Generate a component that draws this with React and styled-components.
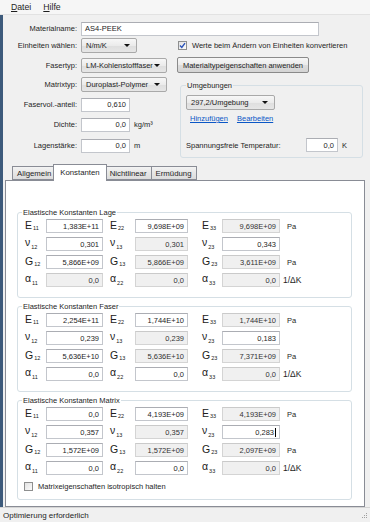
import React from 'react';
import styled, { createGlobalStyle } from 'styled-components';

const GlobalStyle = createGlobalStyle`
  html, body { margin: 0; padding: 0; }
  body {
    background: #f0f0f0;
    font-family: "Liberation Sans", Arial, sans-serif;
    font-size: 7.5px;
    color: #1e1e1e;
  }
`;

const Window = styled.div`
  width: 370px;
  height: 522px;
  display: flex;
  flex-direction: column;
  overflow: hidden;
  background: #f0f0f0;
`;

const MenuBar = styled.div`
  height: 14px;
  display: flex;
  align-items: center;
  gap: 12px;
  padding-left: 11px;
  background: #f6f6f6;
  border-bottom: 1px solid #e2e2e2;
  font-size: 8.7px;
  u { text-decoration: underline; }
`;

const Body = styled.div`
  flex: 1;
  min-height: 0;
  display: flex;
  flex-direction: column;
  border-left: 3px solid #3d5a7b;
`;

const Top = styled.div`
  display: flex;
  flex-direction: column;
  gap: 5px;
  padding-top: 6px;
`;

const Row = styled.div`
  display: grid;
  grid-template-columns: 74px 92px 1fr;
  column-gap: 4px;
  align-items: center;
  height: 15px;
  margin-bottom: ${p => p.$mb || 0}px;
`;

const Label = styled.span`
  text-align: right;
  white-space: nowrap;
`;

const TextBox = styled.div`
  box-sizing: border-box;
  width: ${p => p.$w}px;
  height: 14px;
  display: flex;
  align-items: center;
  justify-content: ${p => (p.$left ? 'flex-start' : 'flex-end')};
  padding: 0 3px;
  background: #fff;
  border: 1px solid #c3c6cc;
  border-top-color: #abadb3;
  grid-column: ${p => p.$span || 'auto'};
`;

const FieldWithUnit = styled.div`
  display: flex;
  align-items: center;
  gap: 4px;
  white-space: nowrap;
`;

const Combo = styled.div`
  box-sizing: border-box;
  position: relative;
  width: ${p => p.$w}px;
  height: 15px;
  display: flex;
  align-items: center;
  padding-left: 4px;
  border: 1px solid #a9a9a9;
  border-radius: 2px;
  background: linear-gradient(#f7f7f7, #ebebeb 50%, #dedede 51%, #e6e6e6);
  white-space: nowrap;
  &::after {
    content: '';
    position: absolute;
    right: 6px;
    top: 5px;
    border-left: 3px solid transparent;
    border-right: 3px solid transparent;
    border-top: 3px solid #111;
  }
`;

const CheckLine = styled.label`
  display: flex;
  align-items: center;
  gap: 5px;
  white-space: nowrap;
  margin-left: ${p => p.$ml || 0}px;
  margin-top: ${p => p.$mt || 0}px;
`;

const Box = styled.span`
  box-sizing: border-box;
  width: 9px;
  height: 9px;
  border: 1px solid #8e8f8f;
  background: linear-gradient(135deg, #e2e2e2, #fbfbfb);
  display: flex;
  align-items: center;
  justify-content: center;
`;

const Button = styled.div`
  box-sizing: border-box;
  width: 132px;
  height: 16px;
  display: flex;
  align-items: center;
  justify-content: center;
  border: 1px solid #8a8a8a;
  border-radius: 2px;
  background: linear-gradient(#f6f6f6, #ebebeb 50%, #dddddd 51%, #d4d4d4);
  white-space: nowrap;
`;

const Split = styled.div`
  display: flex;
  align-items: flex-start;
`;

const LeftCol = styled.div`
  display: flex;
  flex-direction: column;
  gap: 5px;
  width: 170px;
`;

const EnvGroup = styled.fieldset`
  box-sizing: border-box;
  margin: 4px 0 0 7px;
  padding: 0 5px;
  width: 183px;
  height: 77px;
  border: 1px solid #d5dfe5;
  border-radius: 3px;
  min-width: 0;
`;

const Legend = styled.legend`
  padding: 0 1px;
  margin-left: ${p => p.$ml || 0}px;
  line-height: 9px;
  font-size: 7.5px;
`;

const Links = styled.div`
  display: flex;
  gap: 9px;
  margin: 4px 0 0 4px;
`;

const Link = styled.span`
  color: #0b57c6;
  text-decoration: underline;
`;

const TempRow = styled.div`
  display: flex;
  align-items: center;
  margin-top: 15px;
  span:first-child { width: 120px; }
`;

const TabStrip = styled.div`
  display: flex;
  align-items: flex-end;
  padding-left: 9px;
  margin-top: 5px;
  height: 17px;
  font-size: 7.8px;
`;

const Tab = styled.div`
  box-sizing: border-box;
  height: ${p => (p.$active ? 17 : 14)}px;
  padding: 0 ${p => (p.$active ? 6 : 4)}px;
  margin: 0 ${p => (p.$active ? -2 : 0)}px -${p => (p.$active ? 1 : 0)}px;
  display: flex;
  align-items: ${p => (p.$active ? 'flex-start' : 'center')};
  padding-top: ${p => (p.$active ? 3 : 0)}px;
  border: 1px solid #898c95;
  border-bottom: ${p => (p.$active ? 'none' : '1px solid #898c95')};
  border-right-width: ${p => (p.$last || p.$active ? 1 : 0)}px;
  background: ${p => (p.$active ? '#fff' : 'linear-gradient(#f3f3f3, #e6e6e6 50%, #dcdcdc)')};
  position: relative;
  z-index: ${p => (p.$active ? 2 : 1)};
  white-space: nowrap;
`;

const Panel = styled.div`
  flex: 1;
  min-height: 0;
  margin: 0 5px 0 2px;
  padding: 27px 12px 0 11px;
  background: #fff;
  border: 1px solid #898c95;
  display: flex;
  flex-direction: column;
  gap: 4px;
  position: relative;
  z-index: 1;
`;

const Group = styled.fieldset`
  margin: 0;
  padding: 0 6px ${p => p.$pb}px 7px;
  border: 1px solid #d5dfe5;
  border-radius: 3px;
  min-width: 0;
`;

const ConstGrid = styled.div`
  display: grid;
  grid-template-columns: 21px 57px 32px 53px 34px 58px auto;
  grid-auto-rows: 14px;
  row-gap: 4px;
  align-items: center;
  margin-top: 2px;
`;

const Sym = styled.span`
  padding-left: ${p => p.$indent || 0}px;
  font-size: 10.5px;
  line-height: 10px;
  white-space: nowrap;
  color: #202020;
  sub {
    font-size: 5.5px;
    vertical-align: ${p => (p.$low ? -3 : -1)}px;
    margin-left: 1px;
  }
`;

const NumBox = styled.div`
  box-sizing: border-box;
  height: 14px;
  display: flex;
  align-items: center;
  justify-content: flex-end;
  padding-right: 3px;
  background: ${p => (p.$off ? '#f0f0f0' : '#fff')};
  border: 1px solid ${p => (p.$off ? '#d4d4d4' : '#c3c6cc')};
  border-top-color: ${p => (p.$off ? '#cacaca' : '#abadb3')};
  color: ${p => (p.$off ? '#333' : '#1e1e1e')};
`;

const Caret = styled.span`
  display: inline-block;
  width: 1px;
  height: 9px;
  background: #000;
  margin-left: 1px;
`;

const Unit = styled.span`
  padding-left: ${p => p.$pad}px;
  white-space: nowrap;
  font-size: ${p => (p.$big ? 8.5 : 7.5)}px;
`;

const StatusBar = styled.div`
  height: 14px;
  border-top: 1px solid #d5d5d5;
  display: flex;
  align-items: center;
  justify-content: space-between;
  padding: 0 2px 0 3px;
  font-size: 8px;
`;

const CheckMark = () => (
  <svg width="7" height="7" viewBox="0 0 7 7">
    <path d="M1 3.6 L2.8 5.4 L6 1.2" fill="none" stroke="#2a53b8" strokeWidth="1.4" />
  </svg>
);

const Grip = () => (
  <svg width="8" height="8" viewBox="0 0 8 8">
    {[[6, 2], [6, 4], [4, 4], [6, 6], [4, 6], [2, 6]].map(([x, y]) => (
      <rect key={`${x}-${y}`} x={x} y={y} width="1" height="1" fill="#a0a0a0" />
    ))}
  </svg>
);

const groups = [
  {
    title: 'Elastische Konstanten Lage',
    rows: [
      [['E', '11', '1,383E+11'], ['E', '22', '9,698E+09'], ['E', '33', '9,698E+09', true], 'Pa'],
      [['ν', '12', '0,301'], ['ν', '13', '0,301', true], ['ν', '23', '0,343'], null],
      [['G', '12', '5,866E+09'], ['G', '13', '5,866E+09', true], ['G', '23', '3,611E+09', true], 'Pa'],
      [['α', '11', '0,0', true], ['α', '22', '0,0', true], ['α', '33', '0,0', true], '1/ΔK'],
    ],
  },
  {
    title: 'Elastische Konstanten Faser',
    rows: [
      [['E', '11', '2,254E+11'], ['E', '22', '1,744E+10'], ['E', '33', '1,744E+10', true], 'Pa'],
      [['ν', '12', '0,239'], ['ν', '13', '0,239', true], ['ν', '23', '0,183'], null],
      [['G', '12', '5,636E+10'], ['G', '13', '5,636E+10', true], ['G', '23', '7,371E+09', true], 'Pa'],
      [['α', '11', '0,0'], ['α', '22', '0,0'], ['α', '33', '0,0', true], '1/ΔK'],
    ],
  },
  {
    title: 'Elastische Konstanten Matrix',
    check: 'Matrixeigenschaften isotropisch halten',
    rows: [
      [['E', '11', '0,0'], ['E', '22', '4,193E+09'], ['E', '33', '4,193E+09', true], 'Pa'],
      [['ν', '12', '0,357'], ['ν', '13', '0,357', true], ['ν', '23', '0,283', false, true], null],
      [['G', '12', '1,572E+09'], ['G', '13', '1,572E+09', true], ['G', '23', '2,097E+09', true], 'Pa'],
      [['α', '11', '0,0'], ['α', '22', '0,0'], ['α', '33', '0,0', true], '1/ΔK'],
    ],
  },
];

const indents = [0, 7, 14];

function ConstGroup({ g }) {
  return (
    <Group $pb={g.check ? 8 : 10}>
      <Legend $ml={-3}>{g.title}</Legend>
      <ConstGrid>
        {g.rows.map((row, ri) => (
          <React.Fragment key={ri}>
            {row.slice(0, 3).map(([s, sub, val, off, caret], ci) => (
              <React.Fragment key={ci}>
                <Sym $indent={indents[ci]} $low={s === 'ν' || s === 'α'}>
                  {s}<sub>{sub}</sub>
                </Sym>
                <NumBox $off={off}>
                  {val}
                  {caret && <Caret />}
                </NumBox>
              </React.Fragment>
            ))}
            <Unit $pad={row[3] === 'Pa' ? 7 : 3} $big={row[3] !== 'Pa'}>{row[3]}</Unit>
          </React.Fragment>
        ))}
      </ConstGrid>
      {g.check && (
        <CheckLine $ml={-1} $mt={7}>
          <Box />
          {g.check}
        </CheckLine>
      )}
    </Group>
  );
}

export default function App() {
  return (
    <Window>
      <GlobalStyle />
      <MenuBar>
        <span><u>D</u>atei</span>
        <span><u>H</u>ilfe</span>
      </MenuBar>
      <Body>
        <Top>
          <Row $mb={-3}>
            <Label>Materialname:</Label>
            <TextBox $w={238} $left $span="2 / 4">AS4-PEEK</TextBox>
          </Row>
          <Row $mb={-1}>
            <Label>Einheiten wählen:</Label>
            <Combo $w={56}>N/m/K</Combo>
            <CheckLine $ml={1}>
              <Box><CheckMark /></Box>
              Werte beim Ändern von Einheiten konvertieren
            </CheckLine>
          </Row>
          <Row>
            <Label>Fasertyp:</Label>
            <Combo $w={86}>LM-Kohlenstofffaser</Combo>
            <Button>Materialtypeigenschaften anwenden</Button>
          </Row>
          <Split>
            <LeftCol>
              <Row>
                <Label>Matrixtyp:</Label>
                <Combo $w={86}>Duroplast-Polymer</Combo>
              </Row>
              <Row>
                <Label>Faservol.-anteil:</Label>
                <TextBox $w={49}>0,610</TextBox>
              </Row>
              <Row>
                <Label>Dichte:</Label>
                <FieldWithUnit>
                  <TextBox $w={49}>0,0</TextBox>
                  kg/m³
                </FieldWithUnit>
              </Row>
              <Row $mb={0} style={{ marginTop: 1 }}>
                <Label>Lagenstärke:</Label>
                <FieldWithUnit>
                  <TextBox $w={49}>0,0</TextBox>
                  m
                </FieldWithUnit>
              </Row>
            </LeftCol>
            <EnvGroup>
              <Legend>Umgebungen</Legend>
              <Combo $w={89} style={{ marginTop: 5 }}>297,2/Umgebung</Combo>
              <Links>
                <Link>Hinzufügen</Link>
                <Link>Bearbeiten</Link>
              </Links>
              <TempRow>
                <span>Spannungsfreie Temperatur:</span>
                <FieldWithUnit>
                  <TextBox $w={32}>0,0</TextBox>
                  K
                </FieldWithUnit>
              </TempRow>
            </EnvGroup>
          </Split>
        </Top>
        <TabStrip>
          <Tab>Allgemein</Tab>
          <Tab $active>Konstanten</Tab>
          <Tab>Nichtlinear</Tab>
          <Tab $last>Ermüdung</Tab>
        </TabStrip>
        <Panel>
          {groups.map(g => (
            <ConstGroup key={g.title} g={g} />
          ))}
        </Panel>
      </Body>
      <StatusBar>
        <span>Optimierung erforderlich</span>
        <Grip />
      </StatusBar>
    </Window>
  );
}
